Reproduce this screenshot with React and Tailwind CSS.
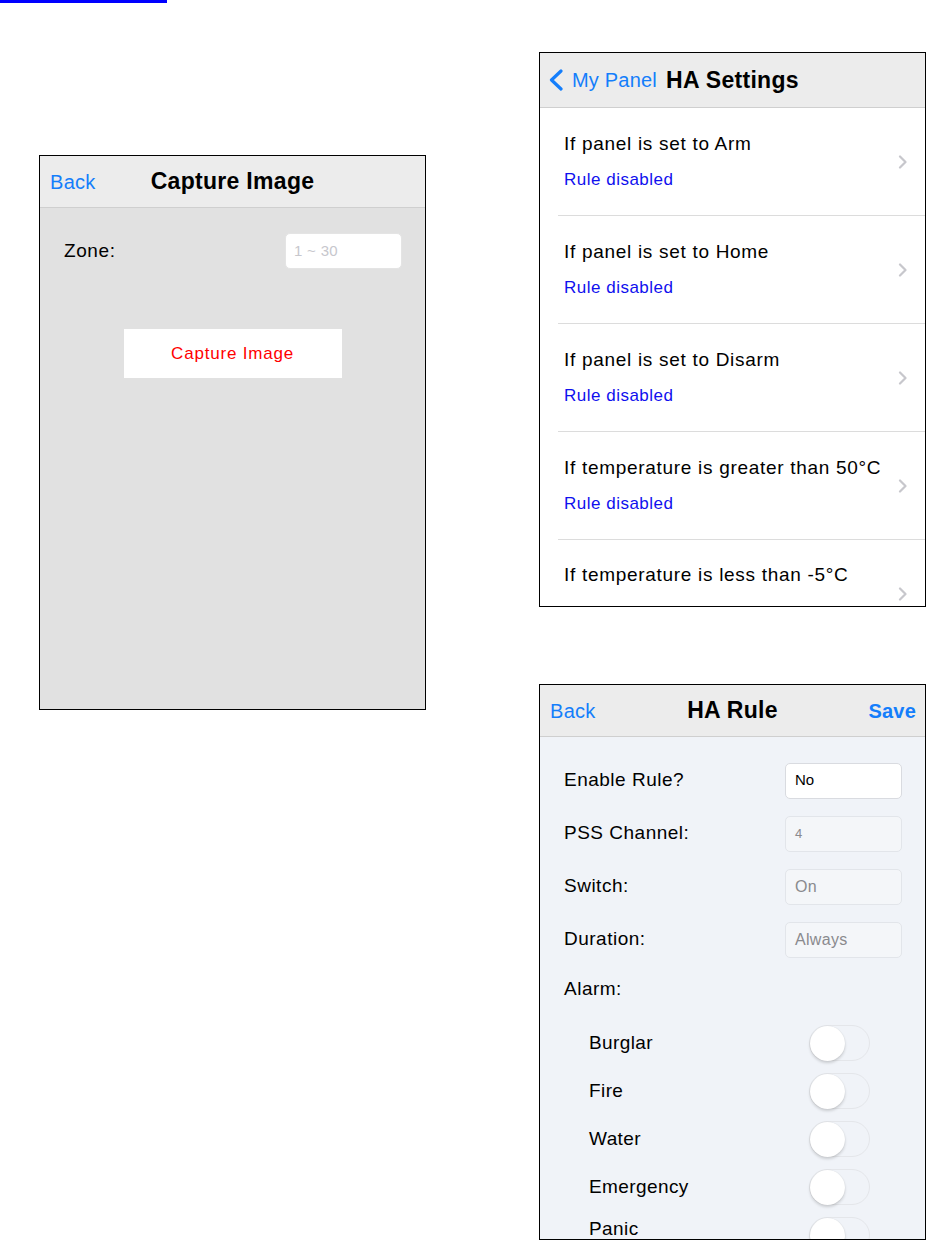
import React from "react";

const Chevron = () => (
  <svg width="10" height="14" viewBox="0 0 10 14" className="shrink-0">
    <path d="M2 1.5 L7.5 7 L2 12.5" fill="none" stroke="#c7c7cc" strokeWidth="2.2" strokeLinecap="round" strokeLinejoin="round" />
  </svg>
);

const NavBar = ({ left, title, right, h = "h-[52px]" }) => (
  <div className={`grid ${h} shrink-0 grid-cols-[1fr_auto_1fr] items-center border-b border-[#cfcfcf] bg-[#ececec]`}>
    <div className="flex items-center pl-[10px]">{left}</div>
    <div className="text-[23px] font-bold tracking-[0.3px] text-black">{title}</div>
    <div className="flex justify-end pr-[9px]">{right}</div>
  </div>
);

const Toggle = () => (
  <div className="flex h-[36px] w-[61px] items-center rounded-full border border-[#e4e6ea]">
    <div className="h-[35px] w-[35px] rounded-full bg-white shadow-[0_2px_3px_rgba(0,0,0,0.16),0_0_1px_rgba(0,0,0,0.12)]" />
  </div>
);

const CaptureImage = () => (
  <div className="flex h-[555px] w-[387px] flex-col overflow-hidden border border-black bg-[#e1e1e1]">
    <NavBar
      h="h-[52px]"
      left={<span className="text-[20px] tracking-[0.3px] text-[#147efb]">Back</span>}
      title="Capture Image"
    />
    <div className="mt-[25px] flex h-[36px] items-center justify-between pl-[24px] pr-[23px]">
      <span className="text-[19px] tracking-[0.6px] text-black">Zone:</span>
      <div className="flex h-[36px] w-[117px] items-center rounded-[5px] border border-[#e4e4e4] bg-white pl-[8px] text-[15px] tracking-[0.3px] text-[#c7c7cd]">
        1 ~ 30
      </div>
    </div>
    <div className="mt-[60px] flex justify-center">
      <div className="flex h-[49px] w-[218px] items-center justify-center bg-white text-[17px] tracking-[0.8px] text-[#ff0000]">
        Capture Image
      </div>
    </div>
  </div>
);

const HASettings = () => {
  const rules = [
    "If panel is set to Arm",
    "If panel is set to Home",
    "If panel is set to Disarm",
    "If temperature is greater than 50°C",
  ];
  return (
    <div className="flex h-[555px] w-[387px] flex-col overflow-hidden border border-black bg-white">
      <NavBar
        h="h-[55px]"
        left={
          <div className="flex items-center">
            <svg width="16" height="22" viewBox="0 0 16 22" className="ml-[-2px] mr-[8px] shrink-0">
              <path d="M13 2 L3.5 11 L13 20" fill="none" stroke="#147efb" strokeWidth="3.2" strokeLinecap="round" strokeLinejoin="round" />
            </svg>
            <span className="text-[20px] tracking-[0.2px] text-[#147efb]">My Panel</span>
          </div>
        }
        title="HA Settings"
      />
      <div className="flex flex-col">
        {rules.map((r, i) => (
          <div key={i} className="ml-[18px] flex h-[108px] shrink-0 items-center border-b border-[#dcdcdc] pl-[6px] pr-[17px]">
            <div className="flex flex-1 flex-col gap-[12px]">
              <span className="text-[19px] leading-[24px] tracking-[0.7px] text-black">{r}</span>
              <span className="text-[17px] leading-[24px] tracking-[0.5px] text-[#1010ee]">Rule disabled</span>
            </div>
            <Chevron />
          </div>
        ))}
        <div className="ml-[18px] flex h-[108px] shrink-0 items-center pl-[6px] pr-[17px]">
          <div className="flex-1 self-start pt-[23px]">
            <span className="text-[19px] leading-[24px] tracking-[0.7px] text-black">
              If temperature is less than -5°C
            </span>
          </div>
          <Chevron />
        </div>
      </div>
    </div>
  );
};

const HARule = () => {
  const fields = [
    { label: "Enable Rule?", value: "No", active: true },
    { label: "PSS Channel:", value: "4", small: true },
    { label: "Switch:", value: "On" },
    { label: "Duration:", value: "Always" },
  ];
  const alarms = ["Burglar", "Fire", "Water", "Emergency", "Panic"];
  return (
    <div className="flex h-[556px] w-[387px] flex-col overflow-hidden border border-black bg-[#f0f3f8]">
      <NavBar
        h="h-[52px]"
        left={<span className="text-[20px] tracking-[0.3px] text-[#147efb]">Back</span>}
        title="HA Rule"
        right={<span className="text-[20px] font-bold tracking-[0.2px] text-[#147efb]">Save</span>}
      />
      <div className="flex flex-col pt-[17px]">
        {fields.map((f) => (
          <div key={f.label} className="flex h-[53px] items-center justify-between pl-[24px] pr-[23px]">
            <span className="text-[19px] tracking-[0.5px] text-black">{f.label}</span>
            <div
              className={
                f.active
                  ? "flex h-[36px] w-[117px] items-center rounded-[5px] border border-[#d9dbe0] bg-white pl-[9px] text-[15px] text-black"
                  : f.small
                  ? "flex h-[36px] w-[117px] items-center rounded-[5px] border border-[#e2e5ea] bg-[#f4f6f9] pl-[9px] text-[13px] text-[#8a8a8e]"
                  : "flex h-[36px] w-[117px] items-center rounded-[5px] border border-[#e2e5ea] bg-[#f4f6f9] pl-[9px] text-[16px] tracking-[0.3px] text-[#8a8a8e]"
              }
            >
              {f.value}
            </div>
          </div>
        ))}
        <div className="flex h-[47px] items-center pl-[24px]">
          <span className="text-[19px] tracking-[0.5px] text-black">Alarm:</span>
        </div>
        <div className="flex flex-col pt-[6px]">
          {alarms.map((a) => (
            <div key={a} className="flex h-[48px] shrink-0 items-center justify-between pl-[49px] pr-[55px]">
              <span className={a === "Panic" ? "mb-[12px] text-[19px] tracking-[0.4px] text-black" : "text-[19px] tracking-[0.4px] text-black"}>
                {a}
              </span>
              <Toggle />
            </div>
          ))}
        </div>
      </div>
    </div>
  );
};

export default function App() {
  return (
    <div className="h-[1240px] w-[926px] overflow-hidden bg-white font-['Liberation_Sans',Arial,sans-serif]">
      <div className="h-[3px] w-[167px] bg-[#0000ff]" />
      <div className="flex items-start">
        <div className="ml-[39px] mt-[152px]">
          <CaptureImage />
        </div>
        <div className="ml-[113px] mt-[49px] flex flex-col gap-[77px]">
          <HASettings />
          <HARule />
        </div>
      </div>
    </div>
  );
}
